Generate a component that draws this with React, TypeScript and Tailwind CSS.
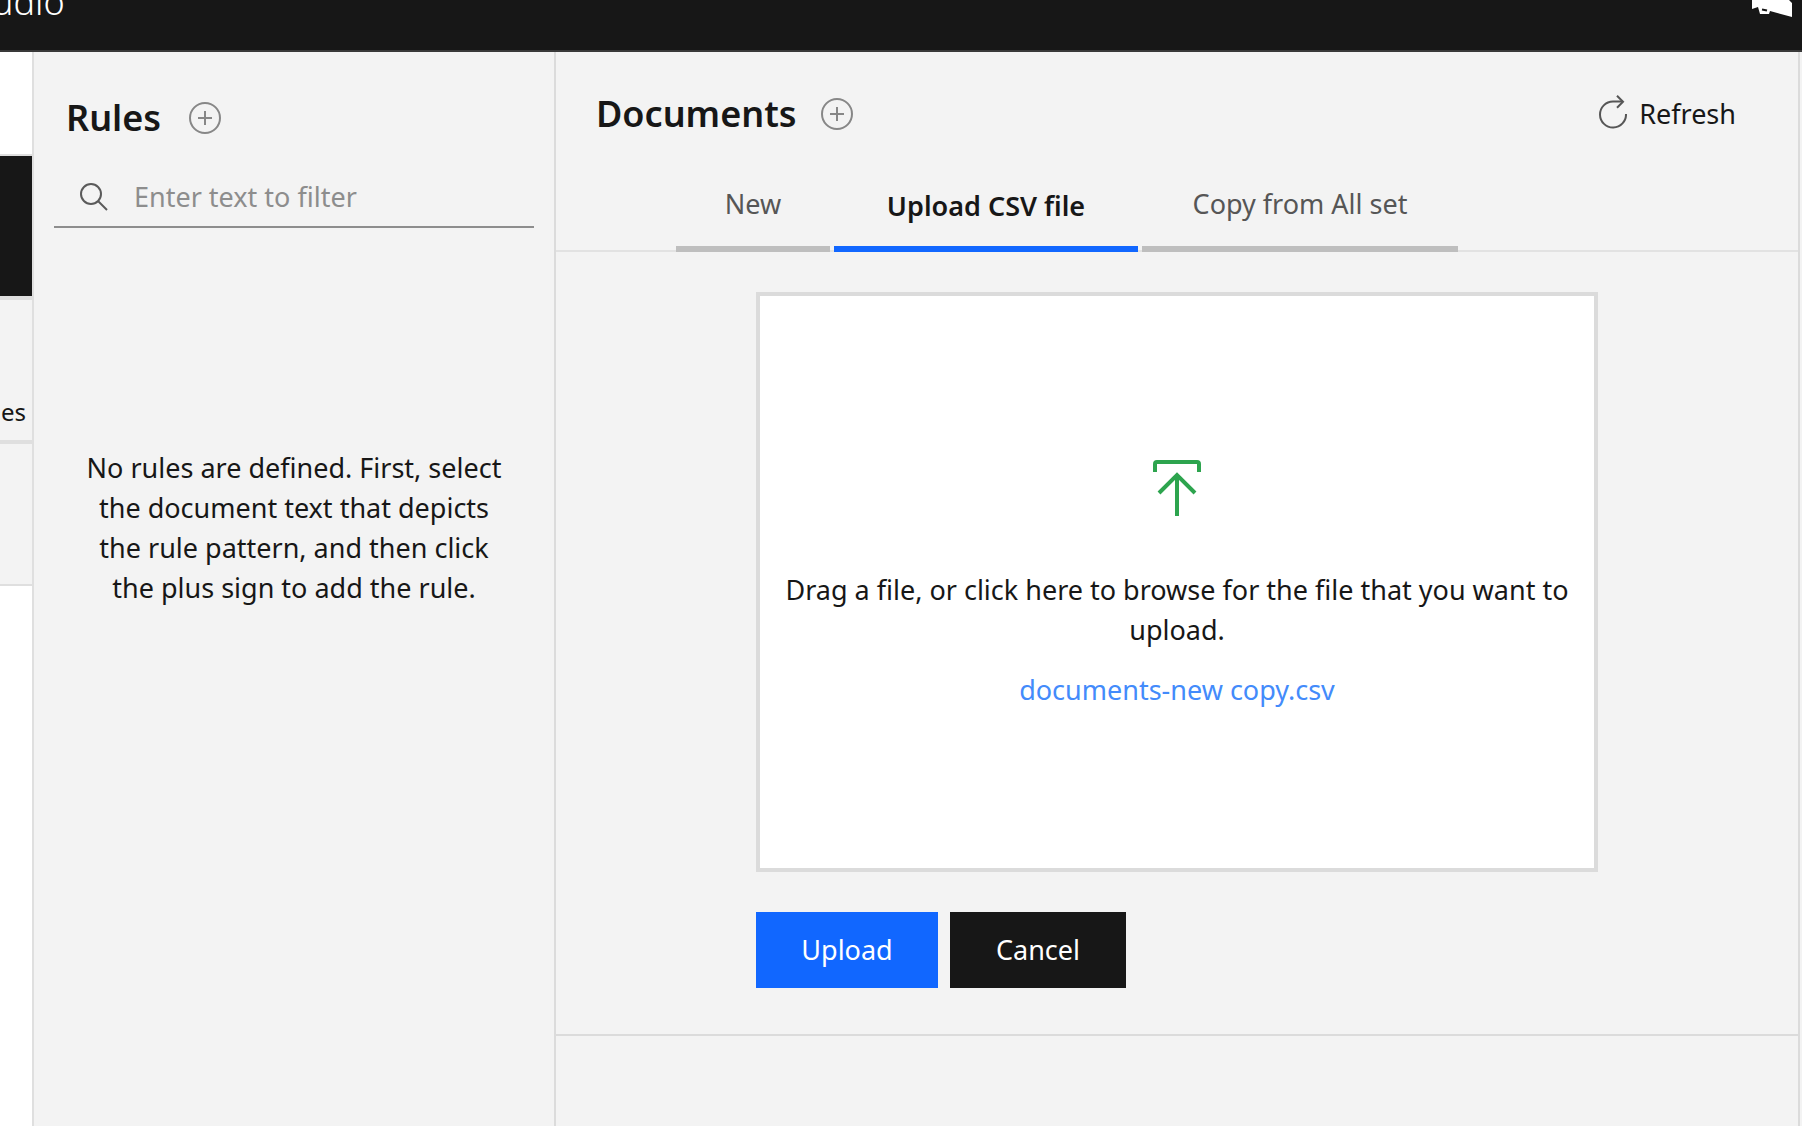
import React from "react";

function AddIcon() {
  return (
    <svg width="32" height="32" viewBox="0 0 32 32" fill="none" stroke="#878787" strokeWidth="2" aria-hidden="true">
      <circle cx="16" cy="16" r="15" />
      <path d="M16 9v14M9 16h14" />
    </svg>
  );
}

function SearchIcon() {
  return (
    <svg width="28" height="28" viewBox="0 0 28 28" fill="none" stroke="#5a5a5a" strokeWidth="2" aria-hidden="true">
      <circle cx="11" cy="11" r="10" />
      <path d="M18 18l9 9" />
    </svg>
  );
}

function RefreshIcon() {
  return (
    <svg className="mb-1" width="28" height="34" viewBox="0 0 28 34" fill="none" stroke="#565656" strokeWidth="2" aria-hidden="true">
      <path d="M27 19A13 13 0 1 1 14 6.500H24" />
      <path d="M18 0.700l6 6-6 6" />
    </svg>
  );
}

function UploadIcon() {
  return (
    <svg width="48" height="56" viewBox="0 0 48 56" fill="none" stroke="#2da44e" strokeWidth="4" aria-hidden="true">
      <path d="M2 12V4a2 2 0 0 1 2-2H44a2 2 0 0 1 2 2V12" />
      <path d="M24 56V15M6 33L24 15L42 33" />
    </svg>
  );
}

function MegaphoneIcon() {
  return (
    <svg width="40" height="17" viewBox="0 0 40 17" aria-hidden="true">
      <path d="M0 0H37L40 3V17L18 11L17 14H8L6 7L0 9Z" fill="#fff" />
      <path d="M10 9.500L15 10.500" stroke="#171717" strokeWidth="2" />
    </svg>
  );
}

const tabs = [
  { label: "New", width: "w-[154px]", active: false },
  { label: "Upload CSV file", width: "w-[304px]", active: true },
  { label: "Copy from All set", width: "w-[316px]", active: false },
];

export default function App() {
  return (
    <div className="flex min-h-screen flex-col bg-[#f3f3f3] font-['Noto_Sans',sans-serif] text-[27px] leading-10 text-[#171717]">
      <header className="flex h-[52px] items-start justify-between overflow-hidden border-b-2 border-[#393939] bg-[#171717] pr-2.5">
        <span className="-mt-[18px] -ml-2 text-4xl leading-10 font-light text-white">udio</span>
        <MegaphoneIcon />
      </header>
      <div className="flex grow">
        <nav className="w-[34px] shrink-0 border-r-2 border-[#dfdfdf] bg-white">
          <div className="h-[104px] border-b-2 border-[#dfdfdf]" />
          <div className="h-36 border-b-4 border-[#dfdfdf] bg-[#171717]" />
          <div className="flex h-36 items-end justify-end border-b-4 border-[#dfdfdf] bg-[#f3f3f3] pr-1.5 pb-2 text-2xl leading-10">
            <span>es</span>
          </div>
          <div className="h-[142px] border-b-2 border-[#dfdfdf] bg-[#f3f3f3]" />
        </nav>
        <section className="flex w-[522px] shrink-0 flex-col border-r-2 border-[#dbdbdb] px-5 pt-11">
          <div className="flex items-center gap-7 pl-3">
            <h2 className="text-4xl leading-11 font-semibold">Rules</h2>
            <button type="button" aria-label="Add rule">
              <AddIcon />
            </button>
          </div>
          <label className="mt-7 flex h-15 items-center gap-[26px] border-b-2 border-[#8d8d8d] pl-[26px]">
            <SearchIcon />
            <input
              type="text"
              aria-label="Filter rules"
              placeholder="Enter text to filter"
              className="min-w-0 grow bg-transparent outline-none placeholder:text-[#8d8d8d]"
            />
          </label>
          <p className="mx-auto mt-[220px] w-[428px] text-center">
            No rules are defined. First, select the document text that depicts the rule pattern, and then click the plus sign to add the rule.
          </p>
        </section>
        <main className="mr-0.5 flex grow flex-col border-r-2 border-[#dbdbdb]">
          <div className="flex items-center gap-6 pt-10 pr-[62px] pl-10">
            <h2 className="text-4xl leading-11 font-semibold">Documents</h2>
            <button type="button" aria-label="Add document">
              <AddIcon />
            </button>
            <button type="button" className="ml-auto flex items-center gap-3">
              <RefreshIcon />
              Refresh
            </button>
          </div>
          <div role="tablist" className="mt-8 flex h-[84px] gap-1 border-b-2 border-[#e2e2e2] pl-[120px]">
            {tabs.map((t) => (
              <button
                key={t.label}
                type="button"
                role="tab"
                aria-selected={t.active}
                className={`${t.width} -mb-0.5 border-b-6 ${
                  t.active ? "border-[#1167ff] pb-0.5 font-semibold" : "border-[#bebebe] pb-1.5 text-[#565656]"
                }`}
              >
                {t.label}
              </button>
            ))}
          </div>
          <div className="border-b-2 border-[#dbdbdb] px-[200px] pt-10 pb-[46px]">
            <button
              type="button"
              className="flex h-[580px] w-full flex-col items-center border-4 border-[#dbdbdb] bg-white px-4 pt-[164px]"
            >
              <UploadIcon />
              <span className="mt-[54px]">Drag a file, or click here to browse for the file that you want to upload.</span>
              <span className="mt-5 text-[#438bfb]">documents-new copy.csv</span>
            </button>
            <div className="mt-10 flex gap-3">
              <button type="button" className="h-19 w-[182px] bg-[#1167ff] text-white">
                Upload
              </button>
              <button type="button" className="h-19 w-44 bg-[#171717] text-white">
                Cancel
              </button>
            </div>
          </div>
        </main>
      </div>
    </div>
  );
}
